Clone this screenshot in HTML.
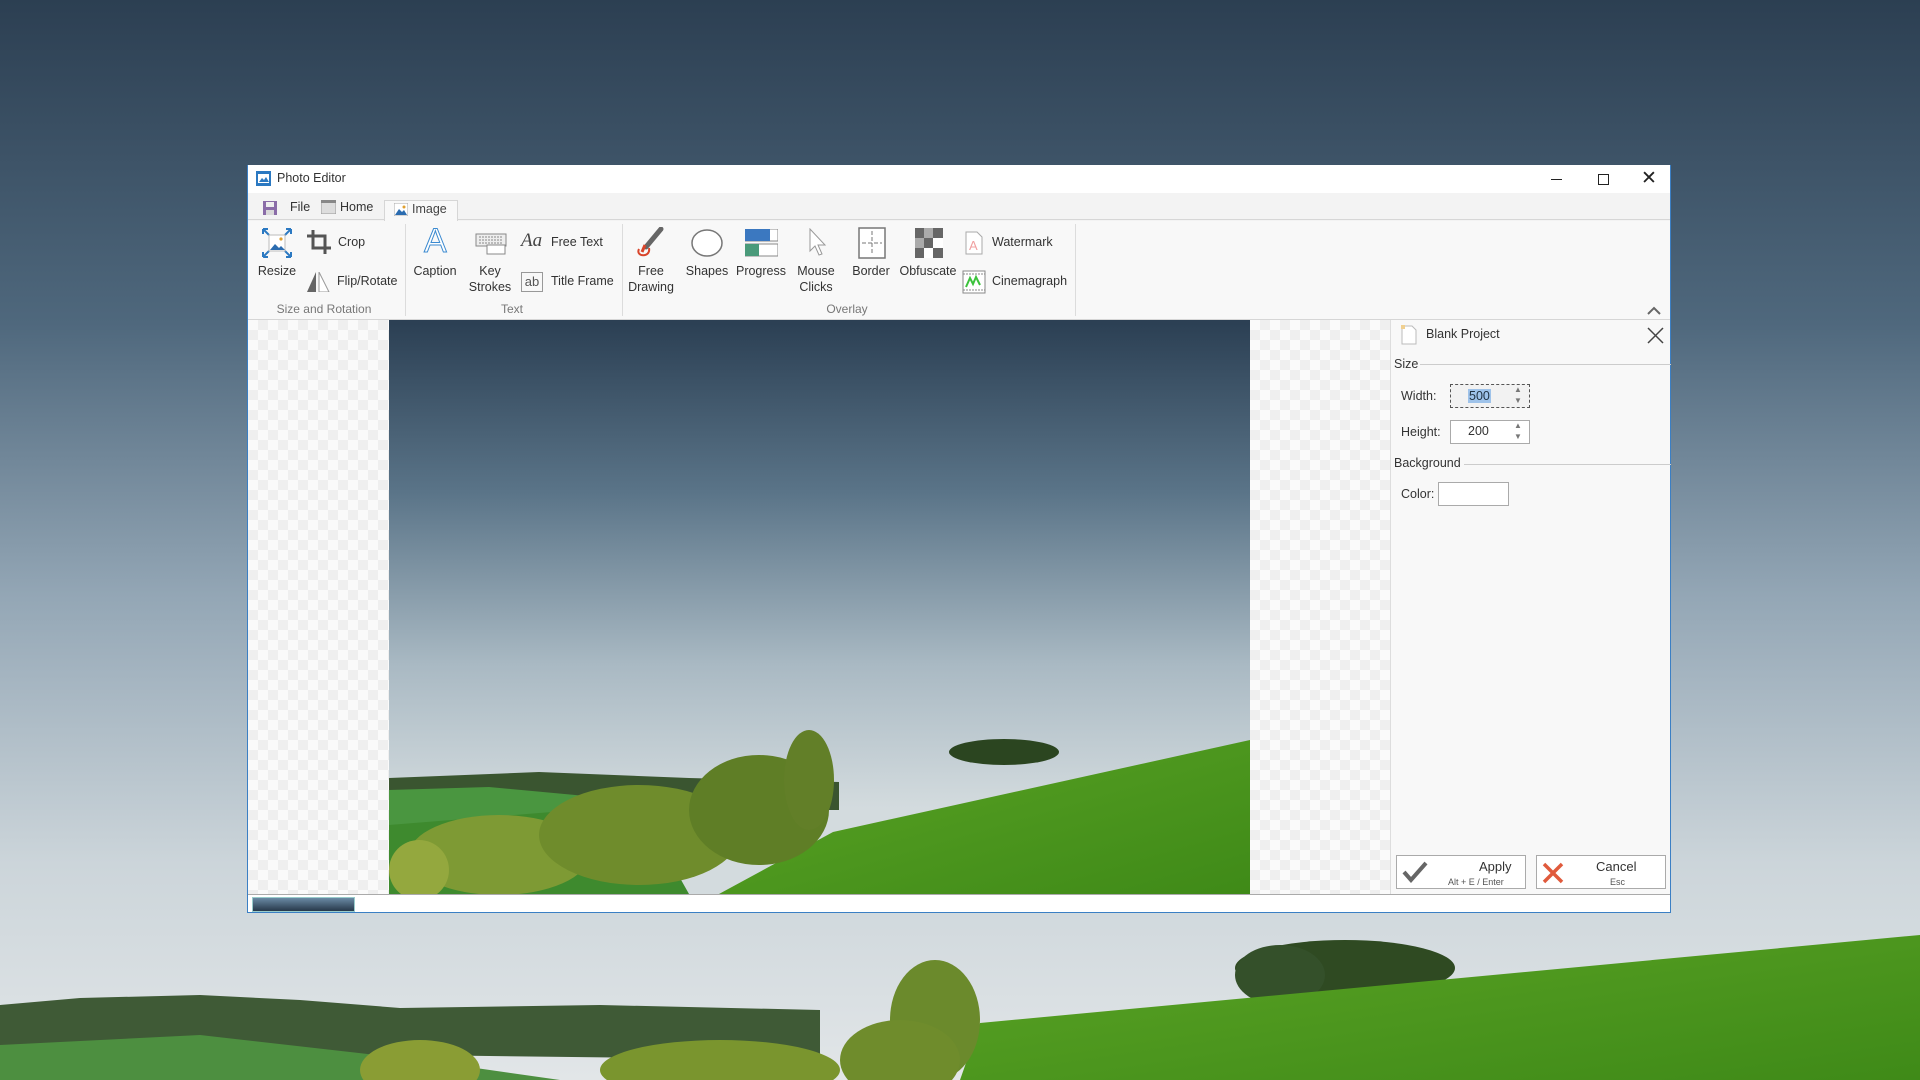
<!DOCTYPE html>
<html><head><meta charset="utf-8"><style>
*{margin:0;padding:0;box-sizing:border-box}
body{width:1920px;height:1080px;overflow:hidden;position:relative;font-family:"Segoe UI","Liberation Sans",sans-serif;font-size:13px;color:#222}
.abs{position:absolute}
.win{position:absolute;left:247px;top:165px;width:1424px;height:748px;background:#f3f3f3;border:1px solid #3b7fc4;border-top:none}
.title{position:absolute;left:0;top:0;width:100%;height:28px;background:#fff}
.lbl{position:absolute;white-space:nowrap;font-size:12.5px;color:#333}
.c{transform:translateX(-50%);text-align:center;line-height:16px}
.grp{position:absolute;font-size:12px;color:#777;transform:translateX(-50%);white-space:nowrap}
.sep{position:absolute;top:224px;width:1px;height:92px;background:#dcdcdc}
.chk{background-color:#fafafa;background-image:linear-gradient(45deg,#efefef 25%,transparent 25%,transparent 75%,#efefef 75%),linear-gradient(45deg,#efefef 25%,transparent 25%,transparent 75%,#efefef 75%);background-size:20px 20px;background-position:0 0,10px 10px}
</style></head><body>
<svg class="abs" style="left:0;top:0" width="1920" height="1080">
<defs><linearGradient id="sky" x1="0" y1="0" x2="0" y2="1"><stop offset="0" stop-color="#2c3f52"/><stop offset="0.3" stop-color="#4f687d"/><stop offset="0.55" stop-color="#93a6b5"/><stop offset="0.8" stop-color="#ccd5da"/><stop offset="1" stop-color="#e2e6e8"/></linearGradient>
<linearGradient id="hill" x1="0" y1="0" x2="1" y2="1"><stop offset="0" stop-color="#5aa324"/><stop offset="1" stop-color="#3f8a18"/></linearGradient></defs>
<rect width="1920" height="1080" fill="url(#sky)"/>
<polygon points="0,1005 80,998 200,995 300,1000 400,1008 600,1005 820,1010 820,1060 0,1050" fill="#3f5a36"/>
<polygon points="0,1045 200,1035 420,1060 560,1080 0,1080" fill="#4d8f40"/>
<ellipse cx="1345" cy="968" rx="110" ry="28" fill="#2f4a22"/>
<ellipse cx="1280" cy="975" rx="45" ry="30" fill="#34502a"/>
<polygon points="980,1023 1920,935 1920,1080 960,1080" fill="url(#hill)"/>
<ellipse cx="935" cy="1020" rx="45" ry="60" fill="#6b8a2c"/>
<ellipse cx="900" cy="1060" rx="60" ry="40" fill="#6f8c2c"/>
<ellipse cx="720" cy="1070" rx="120" ry="30" fill="#7a952e"/>
<ellipse cx="420" cy="1070" rx="60" ry="30" fill="#8a9d34"/>
</svg>
<div class="win">
 <div class="title">
  <svg class="abs" style="left:8px;top:6px" width="15" height="15"><rect width="15" height="15" fill="#2b79c2"/><rect x="2" y="3" width="11" height="9" fill="#fff"/><path d="M3 11l3-4 2 2 2-3 3 5z" fill="#2b79c2"/></svg>
  <div class="lbl" style="left:29px;top:6px;font-size:12.5px">Photo Editor</div>
  <div class="abs" style="left:1303px;top:14px;width:11px;height:1px;background:#222"></div>
  <div class="abs" style="left:1350px;top:9px;width:11px;height:11px;border:1px solid #222"></div>
  <div class="lbl" style="left:1393px;top:2px;font-size:19px;color:#222">✕</div>
 </div>
 <div class="abs" style="left:0;top:28px;width:100%;height:27px;background:#f3f3f3;border-bottom:1px solid #d6d6d6"></div>
 <svg class="abs" style="left:15px;top:36px" width="14" height="14"><rect width="14" height="14" fill="#8a6ca8"/><rect x="3" y="1" width="8" height="5" fill="#eee"/><rect x="3" y="9" width="8" height="5" fill="#d9d9d9"/></svg>
 <div class="lbl" style="left:42px;top:35px">File</div>
 <svg class="abs" style="left:73px;top:35px" width="15" height="14"><rect width="15" height="14" fill="#ddd" stroke="#999"/><rect x="0" y="0" width="15" height="3" fill="#888"/></svg>
 <div class="lbl" style="left:92px;top:35px">Home</div>
 <div class="abs" style="left:136px;top:35px;width:74px;height:21px;background:#f8f8f8;border:1px solid #d6d6d6;border-bottom:none"></div>
 <svg class="abs" style="left:146px;top:38px" width="14" height="13"><rect width="14" height="13" fill="#fff" stroke="#aaa"/><path d="M1 12l4-6 3 3 2-2 3 5z" fill="#2b6cb0"/><circle cx="10" cy="4" r="1.5" fill="#e0a030"/></svg>
 <div class="lbl" style="left:164px;top:37px;color:#444">Image</div>
 <div class="abs" style="left:0;top:56px;width:100%;height:99px;background:#f8f8f8;border-bottom:1px solid #d6d6d6"></div>
</div>
<div class="sep" style="left:405px"></div><div class="sep" style="left:622px"></div><div class="sep" style="left:1075px"></div>
<svg class="abs" style="left:261px;top:227px" width="32" height="32"><path d="M2 2l6 6M2 2h5M2 2v5M30 2l-6 6M30 2h-5M30 2v5M2 30l6-6M2 30h5M2 30v-5M30 30l-6-6M30 30h-5M30 30v-5" stroke="#2b79c2" stroke-width="2"/><rect x="8" y="8" width="16" height="16" fill="#fff" stroke="#bbb"/><path d="M9 23l5-6 4 4 2-2 4 4z" fill="#2b6cb0"/><circle cx="20" cy="12" r="1.6" fill="#e0a030"/></svg>
<div class="lbl c" style="left:277px;top:263px">Resize</div>
<svg class="abs" style="left:307px;top:230px" width="24" height="24"><path d="M6 0v18h18M0 6h18v18" fill="none" stroke="#555" stroke-width="3"/></svg>
<div class="lbl" style="left:338px;top:235px">Crop</div>
<svg class="abs" style="left:306px;top:272px" width="24" height="20"><path d="M10 0v20H1z" fill="#666"/><path d="M13 0v20h10z" fill="#fff" stroke="#999"/></svg>
<div class="lbl" style="left:337px;top:274px">Flip/Rotate</div>
<div class="grp" style="left:324px;top:302px">Size and Rotation</div>
<div class="lbl" style="left:424px;top:222px;font-size:34px;color:#fff;-webkit-text-stroke:1px #3b8ad0;font-family:'Liberation Sans',sans-serif">A</div>
<div class="lbl c" style="left:435px;top:263px">Caption</div>
<svg class="abs" style="left:475px;top:233px" width="32" height="22"><rect x="1" y="1" width="30" height="12" fill="#eee" stroke="#888"/><path d="M4 4h24M4 7h24M4 10h24" stroke="#888" stroke-dasharray="2 1"/><rect x="12" y="12" width="18" height="9" fill="#fff" stroke="#888"/></svg>
<div class="lbl c" style="left:490px;top:263px">Key<br>Strokes</div>
<div class="lbl" style="left:521px;top:230px;font-size:19px;font-style:italic;color:#444;font-family:'Liberation Serif',serif">Aa</div>
<div class="lbl" style="left:551px;top:235px">Free Text</div>
<div class="lbl" style="left:521px;top:272px;width:22px;height:20px;border:1px solid #999;font-size:13px;text-align:center;line-height:17px;color:#555">ab</div>
<div class="lbl" style="left:551px;top:274px">Title Frame</div>
<div class="grp" style="left:512px;top:302px">Text</div>
<svg class="abs" style="left:635px;top:227px" width="32" height="32"><path d="M26 2L11 20" stroke="#666" stroke-width="5" stroke-linecap="round"/><path d="M10 18l-3 7" stroke="#d9442a" stroke-width="3"/><path d="M4 22c-4 8 12 9 10-1" fill="none" stroke="#d9442a" stroke-width="2"/></svg>
<div class="lbl c" style="left:651px;top:263px">Free<br>Drawing</div>
<svg class="abs" style="left:690px;top:228px" width="34" height="30"><ellipse cx="17" cy="15" rx="15" ry="13" fill="#fff" stroke="#777" stroke-width="1.5"/></svg>
<div class="lbl c" style="left:707px;top:263px">Shapes</div>
<svg class="abs" style="left:745px;top:229px" width="33" height="28"><rect x="0" y="0" width="33" height="12" fill="#fff" stroke="#888"/><rect x="0" y="0" width="25" height="12" fill="#3b78c0"/><rect x="0" y="15" width="33" height="12" fill="#fff" stroke="#888"/><rect x="0" y="15" width="14" height="12" fill="#4a9a7a"/></svg>
<div class="lbl c" style="left:761px;top:263px">Progress</div>
<svg class="abs" style="left:808px;top:228px" width="20" height="30"><path d="M2 1v22l5-5 4 9 3-1-4-9h7z" fill="#fff" stroke="#999"/></svg>
<div class="lbl c" style="left:816px;top:263px">Mouse<br>Clicks</div>
<svg class="abs" style="left:858px;top:227px" width="28" height="32"><rect x="1" y="1" width="26" height="30" fill="#fff" stroke="#777" stroke-width="1.5"/><path d="M14 4v24M4 16h20" stroke="#777" stroke-dasharray="4 2"/></svg>
<div class="lbl c" style="left:871px;top:263px">Border</div>
<svg class="abs" style="left:915px;top:228px" width="28" height="30"><rect width="28" height="30" fill="#fff"/><g fill="#666"><rect x="0" y="0" width="9" height="10"/><rect x="18" y="0" width="10" height="10"/><rect x="9" y="10" width="9" height="10"/><rect x="0" y="20" width="9" height="10"/><rect x="18" y="20" width="10" height="10"/></g><g fill="#aaa"><rect x="9" y="0" width="9" height="10"/><rect x="0" y="10" width="9" height="10"/></g></svg>
<div class="lbl c" style="left:928px;top:263px">Obfuscate</div>
<svg class="abs" style="left:965px;top:231px" width="18" height="24"><path d="M1 1h11l5 5v17H1z" fill="#fff" stroke="#aaa"/><text x="4" y="19" font-size="13" fill="#f0a0a0" font-family="Liberation Sans">A</text></svg>
<div class="lbl" style="left:992px;top:235px">Watermark</div>
<svg class="abs" style="left:962px;top:270px" width="24" height="24"><rect x="1" y="1" width="22" height="22" fill="#fff" stroke="#888"/><path d="M1 4h22M1 20h22" stroke="#888" stroke-dasharray="2 1"/><path d="M4 17l4-9 3 6 3-7 4 8" fill="none" stroke="#3cc23c" stroke-width="2"/></svg>
<div class="lbl" style="left:992px;top:274px">Cinemagraph</div>
<div class="grp" style="left:847px;top:302px">Overlay</div>
<svg class="abs" style="left:1647px;top:306px" width="14" height="9"><path d="M1 8l6-6 6 6" fill="none" stroke="#666" stroke-width="2"/></svg>
<div class="abs chk" style="left:248px;top:320px;width:141px;height:574px"></div>
<div class="abs chk" style="left:1250px;top:320px;width:140px;height:574px"></div>
<svg class="abs" style="left:389px;top:320px" width="861" height="574">
<defs><linearGradient id="s2" x1="0" y1="0" x2="0" y2="1"><stop offset="0" stop-color="#2b3f53"/><stop offset="0.3" stop-color="#5a7488"/><stop offset="0.6" stop-color="#a9b9c3"/><stop offset="0.85" stop-color="#d3dbde"/></linearGradient></defs>
<rect width="861" height="574" fill="url(#s2)"/>
<polygon points="0,458 150,452 300,458 450,462 450,490 0,490" fill="#3a5530"/>
<polygon points="0,470 100,467 240,480 150,505 0,515" fill="#4a9640"/>
<polygon points="0,505 250,485 300,574 0,574" fill="#3e8a2e"/>
<ellipse cx="615" cy="432" rx="55" ry="13" fill="#2b4520"/>
<polygon points="861,420 444,512 330,574 861,574" fill="url(#hill)"/>
<ellipse cx="110" cy="535" rx="90" ry="40" fill="#7e9a34"/>
<ellipse cx="250" cy="515" rx="100" ry="50" fill="#6f8c2c"/>
<ellipse cx="370" cy="490" rx="70" ry="55" fill="#5f7e26"/>
<ellipse cx="420" cy="460" rx="25" ry="50" fill="#627f28"/>
<ellipse cx="30" cy="550" rx="30" ry="30" fill="#94a83e"/>
</svg>
<div class="abs" style="left:1390px;top:320px;width:280px;height:574px;background:#f8f8f8;border-left:1px solid #ddd"></div>
<svg class="abs" style="left:1401px;top:325px" width="16" height="20"><path d="M1 1h10l4 4v14H1z" fill="#fff" stroke="#bbb"/><rect x="0" y="0" width="4" height="4" fill="#f0d090"/></svg>
<div class="lbl" style="left:1426px;top:327px">Blank Project</div>
<svg class="abs" style="left:1647px;top:327px" width="17" height="17"><path d="M1 1l15 15M16 1L1 16" stroke="#444" stroke-width="1.5"/></svg>
<div class="lbl" style="left:1394px;top:357px">Size</div>
<div class="abs" style="left:1420px;top:364px;width:251px;height:1px;background:#ccc"></div>
<div class="lbl" style="left:1401px;top:389px">Width:</div>
<div class="abs" style="left:1450px;top:384px;width:80px;height:24px;border:1px dashed #555;background:#f2f2f2"></div>
<div class="lbl" style="left:1468px;top:389px;background:#9fc3ea;color:#234;padding:0 1px">500</div>
<div class="lbl" style="left:1514px;top:384px;font-size:8px;color:#777;line-height:11px">▲<br>▼</div>
<div class="lbl" style="left:1401px;top:425px">Height:</div>
<div class="abs" style="left:1450px;top:420px;width:80px;height:24px;border:1px solid #aaa;background:#fff"></div>
<div class="lbl" style="left:1468px;top:424px">200</div>
<div class="lbl" style="left:1514px;top:420px;font-size:8px;color:#777;line-height:11px">▲<br>▼</div>
<div class="lbl" style="left:1394px;top:456px">Background</div>
<div class="abs" style="left:1464px;top:464px;width:207px;height:1px;background:#ccc"></div>
<div class="lbl" style="left:1401px;top:487px">Color:</div>
<div class="abs" style="left:1438px;top:482px;width:71px;height:24px;border:1px solid #aaa;background:#fff"></div>
<div class="abs" style="left:1396px;top:855px;width:130px;height:34px;border:1px solid #aaa;background:#fff"></div>
<svg class="abs" style="left:1402px;top:861px" width="26" height="22"><path d="M2 11l7 8L24 2" fill="none" stroke="#666" stroke-width="4"/></svg>
<div class="lbl" style="left:1479px;top:859px;font-size:13px">Apply</div>
<div class="lbl" style="left:1448px;top:877px;font-size:9px;color:#555">Alt + E / Enter</div>
<div class="abs" style="left:1536px;top:855px;width:130px;height:34px;border:1px solid #aaa;background:#fff"></div>
<svg class="abs" style="left:1542px;top:862px" width="22" height="22"><path d="M2 2l18 18M20 2L2 20" stroke="#e05a3c" stroke-width="3.5"/></svg>
<div class="lbl" style="left:1596px;top:859px;font-size:13px">Cancel</div>
<div class="lbl" style="left:1610px;top:877px;font-size:9px;color:#555">Esc</div>
<div class="abs" style="left:248px;top:894px;width:1422px;height:1px;background:#aaa"></div>
<div class="abs" style="left:248px;top:895px;width:1422px;height:17px;background:#fff"></div>
<div class="abs" style="left:252px;top:897px;width:103px;height:15px;background:linear-gradient(#6a8aa4,#27384a);border:1px solid #9cc"></div>
</body></html>
